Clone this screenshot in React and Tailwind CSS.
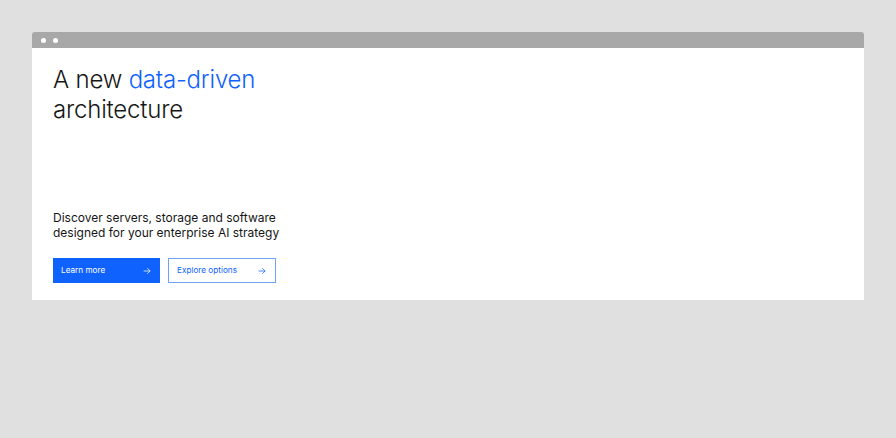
const ArrowRight = ({ className }) => (
  <svg viewBox="0 0 16 16" className={className} fill="none" stroke="currentColor" strokeWidth="1.2">
    <path d="M2.5 8h10.5M8.5 3.5 13 8l-4.5 4.5" />
  </svg>
);

export default function App() {
  return (
    <div className="min-h-[438px] w-full bg-[#e0e0e0] px-8 pt-8" style={{ fontFamily: "Inter, 'Noto Sans', sans-serif" }}>
      {/* Browser frame */}
      <div className="overflow-hidden rounded-t-[3px]">
        <div className="flex h-4 items-center gap-[7px] bg-[#a8a8a8] px-[9px]">
          <span className="h-[5px] w-[5px] rounded-full bg-white" />
          <span className="h-[5px] w-[5px] rounded-full bg-white" />
        </div>
        <div className="h-[252px] bg-white pl-[21px] pt-[17px]">
          <h1 className="text-[24px] font-light leading-[30px] tracking-[-0.2px] text-[#161616]">
            A new <span className="text-[#0f62fe]">data-driven</span>
            <br />
            architecture
          </h1>
          <p className="mt-[85px] text-[12px] leading-[15px] text-[#161616]">
            Discover servers, storage and software
            <br />
            designed for your enterprise AI strategy
          </p>
          <div className="mt-[18px] flex gap-2">
            <button className="flex h-[25px] w-[107px] items-center justify-between bg-[#0f62fe] pl-[8px] pr-[8px] text-[8.2px] text-white">
              Learn more
              <ArrowRight className="h-[10px] w-[10px]" />
            </button>
            <button className="flex h-[25px] w-[108px] items-center justify-between border border-[#0f62fe]/60 bg-white pl-[8px] pr-[8px] text-[8.2px] text-[#0f62fe]">
              Explore options
              <ArrowRight className="h-[10px] w-[10px]" />
            </button>
          </div>
        </div>
      </div>
    </div>
  );
}
